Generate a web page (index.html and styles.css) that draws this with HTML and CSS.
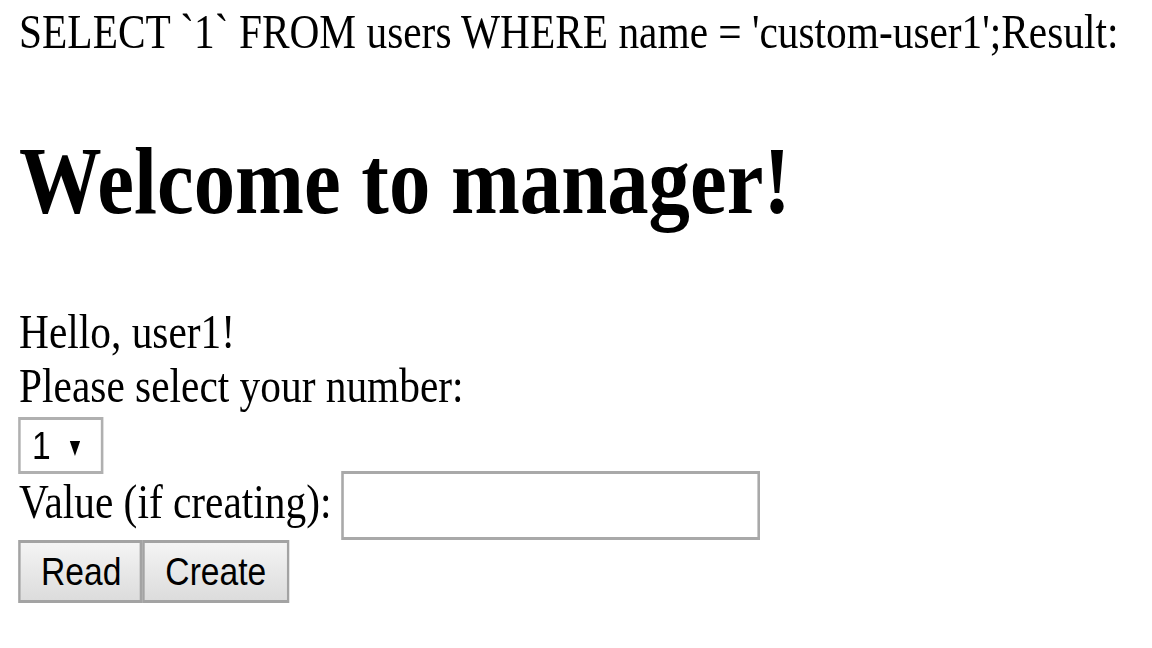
FILE: index.html
```html
<!DOCTYPE html>
<html>
<head>
<meta charset="utf-8">
<title>manager</title>
<link rel="stylesheet" href="styles.css">
</head>
<body>
<div class="page">
  <div class="query">SELECT `1` FROM users WHERE name = 'custom-user1';Result:</div>
  <h1 class="title">Welcome to manager!</h1>
  <form class="form">
    <div class="line">Hello, user1!</div>
    <div class="line">Please select your number:</div>
    <div class="select-row">
      <span class="select-wrap">
        <select class="select" name="number">
          <option>1</option>
          <option>2</option>
          <option>3</option>
        </select>
      </span>
    </div>
    <div class="value-row">Value (if creating): <input class="input" type="text" name="value"></div>
    <div class="buttons">
      <button class="btn" type="button">Read</button><button class="btn" type="button">Create</button>
    </div>
  </form>
</div>
</body>
</html>
```
FILE: styles.css
```css
html {
  overflow: hidden;
}

body {
  margin: 0;
  padding: 0;
  background: #fff;
  width: 1152px;
  height: 648px;
}

.page {
  width: 446px;
  height: 216px;
  padding: 2.4px 8px 0 7.4px;
  font-family: "Liberation Serif", "Times New Roman", serif;
  font-size: 16px;
  color: #000;
  transform: scale(2.585, 3);
  transform-origin: 0 0;
}

.query {
  white-space: nowrap;
  line-height: 18.4px;
}

.title {
  font-size: 32px;
  font-weight: bold;
  margin: 21.44px 0 22.9px 0;
  line-height: 36.8px;
}

.form {
  margin: 0;
}

.line {
  line-height: 18.4px;
}

.select-row {
  height: 18.6px;
}

.select-wrap {
  position: relative;
  display: inline-block;
}

.select-wrap::after {
  content: "";
  position: absolute;
  left: 19.5px;
  top: 7.3px;
  width: 0;
  height: 0;
  border-left: 2.6px solid transparent;
  border-right: 2.6px solid transparent;
  border-top: 5.2px solid #000;
  pointer-events: none;
}

.select {
  display: block;
  -webkit-appearance: none;
  appearance: none;
  box-sizing: border-box;
  width: 32.2px;
  height: 18.6px;
  margin: 0;
  padding: 0 0 0 4px;
  border: 1px solid #b0b0b0;
  border-radius: 0;
  background: #fff;
  color: #000;
  font-family: "Liberation Sans", Arial, sans-serif;
  font-size: 13px;
  line-height: 16px;
}

.value-row {
  line-height: 18.4px;
  white-space: nowrap;
}

.input {
  box-sizing: border-box;
  width: 161.6px;
  height: 22.4px;
  margin: 0;
  padding: 1px 2px;
  border: 1px solid #a9a9a9;
  border-radius: 0;
  font-family: "Liberation Sans", Arial, sans-serif;
  font-size: 13px;
  vertical-align: baseline;
  outline: none;
}

.buttons {
  display: flex;
  height: 21.7px;
}

.btn {
  box-sizing: border-box;
  height: 21.7px;
  margin: 0;
  padding: 0 7.5px;
  border: 1px solid #a3a3a3;
  border-radius: 0;
  background: linear-gradient(#f4f4f4, #dcdcdc);
  color: #000;
  font-family: "Liberation Sans", Arial, sans-serif;
  font-size: 13px;
  line-height: 16px;
}
```
